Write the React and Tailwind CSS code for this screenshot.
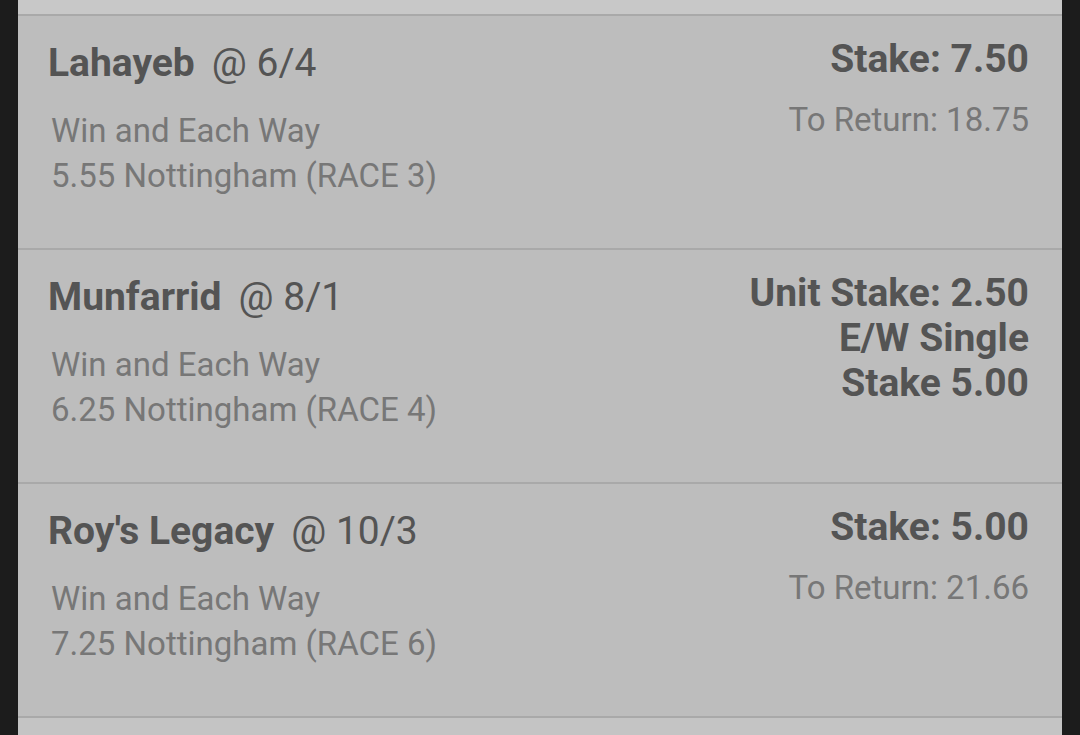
import React from 'react';

// Each-way bet slip entries
const bets = [
    {
        horse: 'Lahayeb',
        odds: '6/4',
        type: 'Win and Each Way',
        race: '5.55 Nottingham (RACE 3)',
        stake: ['Stake: 7.50'],
        toReturn: '18.75',
    },
    {
        horse: 'Munfarrid',
        odds: '8/1',
        type: 'Win and Each Way',
        race: '6.25 Nottingham (RACE 4)',
        stake: ['Unit Stake: 2.50', 'E/W Single', 'Stake 5.00'],
        toReturn: null,
    },
    {
        horse: "Roy's Legacy",
        odds: '10/3',
        type: 'Win and Each Way',
        race: '7.25 Nottingham (RACE 6)',
        stake: ['Stake: 5.00'],
        toReturn: '21.66',
    },
];

function BetRow({ bet }) {
    return (
        <div className="flex justify-between h-[234px] border-b-2 border-[#a9a9a9] bg-[#bdbdbd] shrink-0">
            <div className="pt-[25px] pl-[30px]">
                <div className="flex items-baseline text-[39px] leading-[45px] text-[#545454]">
                    <span className="font-bold">{bet.horse}</span>
                    <span className="ml-[17px]">@ {bet.odds}</span>
                </div>
                <div className="mt-[22px] pl-[3px] text-[33px] leading-[45px] text-[#777777]">
                    <div>{bet.type}</div>
                    <div>{bet.race}</div>
                </div>
            </div>
            <div className="pt-[21px] pr-[33px] text-right">
                <div className="text-[39px] leading-[45px] font-bold text-[#545454]">
                    {bet.stake.map((line) => (
                        <div key={line}>{line}</div>
                    ))}
                </div>
                {bet.toReturn && (
                    <div className="mt-[15px] text-[33px] leading-[45px] text-[#777777]">
                        To Return: {bet.toReturn}
                    </div>
                )}
            </div>
        </div>
    );
}

export default function App() {
    return (
        <div
            className="w-[1080px] h-[735px] overflow-hidden flex bg-[#1c1c1c]"
            style={{ fontFamily: 'Roboto, "Liberation Sans", sans-serif' }}
        >
            <div className="w-[18px] shrink-0" />
            <div className="flex-1 flex flex-col overflow-hidden">
                <div className="h-[16px] shrink-0 bg-[#c8c8c8] border-b-2 border-[#a9a9a9]" />
                {bets.map((bet) => (
                    <BetRow key={bet.horse} bet={bet} />
                ))}
                <div className="flex-1 bg-[#c4c4c4]" />
            </div>
            <div className="w-[18px] shrink-0" />
        </div>
    );
}
